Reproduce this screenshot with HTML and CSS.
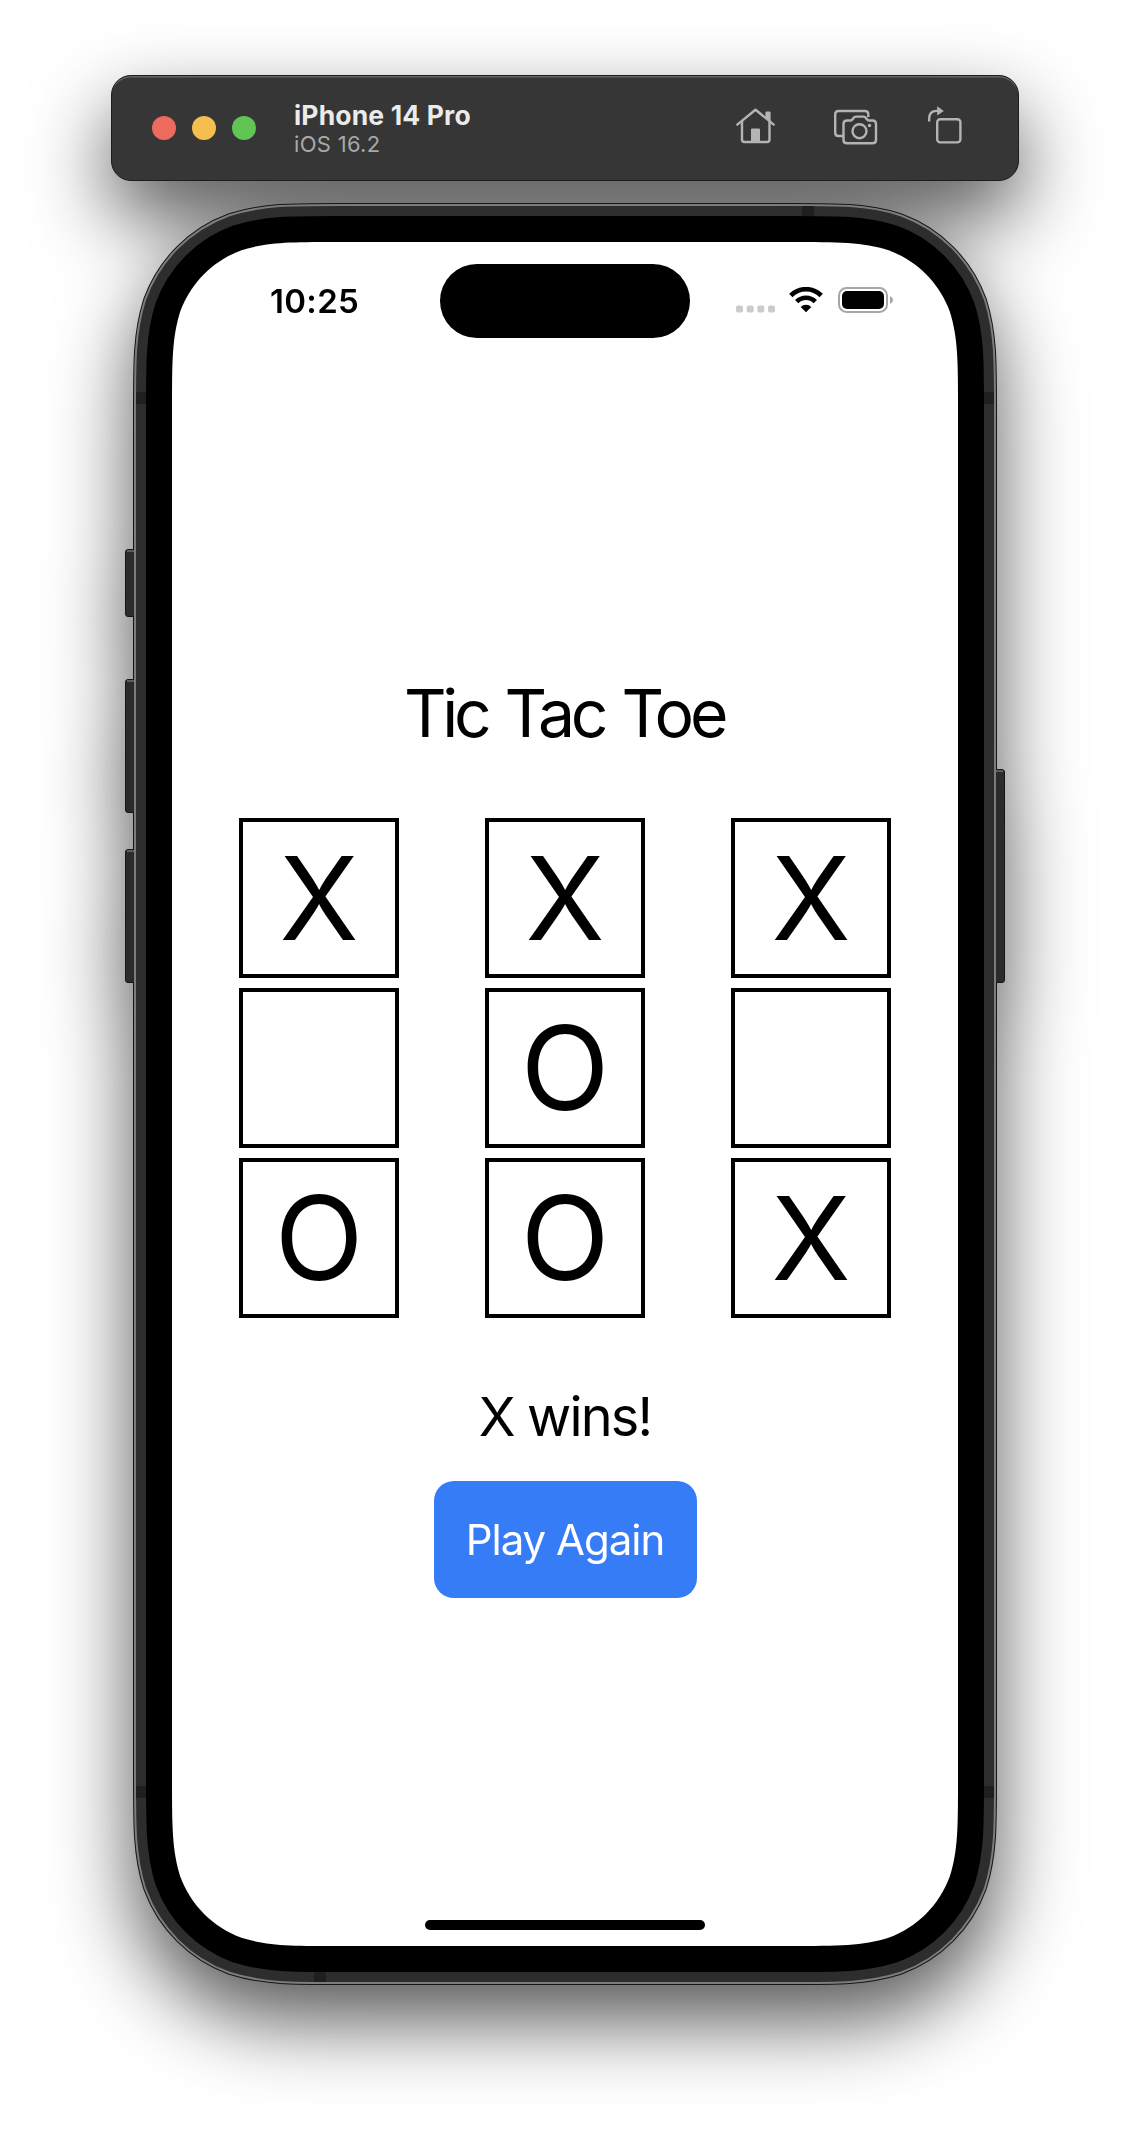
FILE: index.html
```html
<!DOCTYPE html>
<html lang="en">
<head>
<meta charset="utf-8">
<title>iPhone 14 Pro – Tic Tac Toe</title>
<link rel="stylesheet" href="styles.css">
</head>
<body>
<div class="simulator">
  <header class="toolbar">
    <div class="lights">
      <span class="light light-close"></span>
      <span class="light light-minimise"></span>
      <span class="light light-zoom"></span>
    </div>
    <div class="device">
      <div class="device-name">iPhone 14 Pro</div>
      <div class="device-os">iOS 16.2</div>
    </div>
    <div class="actions">
      <svg width="40" height="36" viewBox="0 0 40 36" fill="none" stroke="currentColor" stroke-width="2.4" stroke-linejoin="round" stroke-linecap="round">
        <path d="M1.3 16.6 L19.5 1.7 L37.7 16.6"/>
        <path d="M30.6 10V4.6H33.4V12.5" fill="currentColor"/>
        <path d="M6 13V31.5Q6 34 8.5 34H31Q33.5 34 33.5 31.5V13"/>
        <path d="M15.5 34V21H23.5V34Z" fill="currentColor" stroke-width="1"/>
      </svg>
      <svg width="44" height="36" viewBox="0 0 44 36" fill="none" stroke="currentColor" stroke-width="2.4" stroke-linejoin="round">
        <path d="M9 27H4.5Q1.2 27 1.2 23.7V5.3Q1.2 2 4.5 2H31Q34.3 2 34.3 5.3V8"/>
        <path d="M13 11.5H16.5Q17.8 11.5 18.6 10.2L19.7 8.7Q20.5 7.6 22 7.6H29.5Q31 7.6 31.8 8.7L32.9 10.2Q33.7 11.5 35 11.5H38.5Q42 11.5 42 15V31Q42 34.3 38.5 34.3H13Q9.5 34.3 9.5 31V15Q9.5 11.5 13 11.5Z"/>
        <circle cx="25.5" cy="22.2" r="7"/>
        <circle cx="35.5" cy="16.5" r="1.7" fill="currentColor" stroke="none"/>
      </svg>
      <svg class="rotate" width="34" height="38" viewBox="0 0 34 38" fill="none" stroke="currentColor" stroke-width="2.4">
        <rect x="9.2" y="13.2" width="23.2" height="23.2" rx="3"/>
        <path d="M1.2 15.5V12.5Q1.2 4.9 8.5 4.9H10"/>
        <path d="M9.2 0.3L15.8 4.9L9.2 9.6Z" fill="currentColor" stroke="none"/>
      </svg>
    </div>
  </header>

  <main class="phone">
    <svg class="frame" width="864" height="1782" viewBox="0 0 864 1782">
      <defs>
        <path id="edge" d="M207.15 39H656.85C705.27 39 729.48 39 755.54 47.24C783.99 57.6 806.4 80.01 816.76 108.46C825 134.52 825 158.73 825 207.15V1574.85C825 1623.27 825 1647.48 816.76 1673.54C806.4 1701.99 783.99 1724.4 755.54 1734.76C729.48 1743 705.27 1743 656.85 1743H207.15C158.73 1743 134.52 1743 108.46 1734.76C80.01 1724.4 57.6 1701.99 47.24 1673.54C39 1647.48 39 1623.27 39 1574.85V207.15C39 158.73 39 134.52 47.24 108.46C57.6 80.01 80.01 57.6 108.46 47.24C134.52 39 158.73 39 207.15 39Z"/>
      </defs>
      <use href="#edge" class="rim"/>
      <g class="keys">
        <rect x="-7.5" y="346.5" width="14" height="67" rx="2.5"/>
        <rect x="-7.5" y="476.5" width="14" height="133" rx="2.5"/>
        <rect x="-7.5" y="646.5" width="14" height="133" rx="2.5"/>
        <rect x="858" y="566.5" width="13.5" height="213" rx="2.5"/>
      </g>
      <path class="key-tops" d="M-6 348H2M-6 478H2M-6 648H2M862 568H870"/>
      <use href="#edge" class="chamfer"/>
      <use href="#edge" class="band"/>
      <path class="antenna" d="M669 3h12v10h-12zM181 1769h12v10h-12zM3 189h10v12H3zM851 189h10v12h-10zM3 1583h10v12H3zM851 1583h10v12h-10z"/>
      <use href="#edge" class="bezel"/>
      <use href="#edge" class="glass"/>
    </svg>

    <div class="screen">
      <div class="status-bar">
        <div class="clock">10:25</div>
        <div class="island"></div>
        <div class="indicators">
          <svg width="39" height="8" viewBox="0 0 39 8" fill="#cbcbcb">
            <rect x="0" y="0.5" width="7" height="7" rx="2"/><rect x="10.7" y="0.5" width="7" height="7" rx="2"/><rect x="21.3" y="0.5" width="7" height="7" rx="2"/><rect x="32" y="0.5" width="7" height="7" rx="2"/>
          </svg>
          <svg class="wifi" width="34" height="26" viewBox="0 0 34 26" fill="none" stroke="#000" stroke-width="4.7">
            <path d="M1.8 8.5A21.5 21.5 0 0 1 32.2 8.5"/>
            <path d="M7.7 14.6A13.1 13.1 0 0 1 26.3 14.6"/>
            <path d="M17 25.2L11.7 20A7.5 7.5 0 0 1 22.3 20Z" fill="#000" stroke="none"/>
          </svg>
          <svg width="56" height="26" viewBox="0 0 56 26">
            <rect x="1" y="1" width="48" height="24" rx="7.5" fill="none" stroke="#a6a6a6" stroke-width="2"/>
            <rect x="4" y="4" width="42" height="18" rx="5" fill="#000"/>
            <path d="M52 9Q55 10.5 55 13Q55 15.5 52 17Z" fill="#a6a6a6"/>
          </svg>
        </div>
      </div>

      <div class="game">
        <h1 class="title">Tic Tac Toe</h1>
        <div class="board">
          <div class="cell">X</div><div class="cell">X</div><div class="cell">X</div>
          <div class="cell"></div><div class="cell">O</div><div class="cell"></div>
          <div class="cell">O</div><div class="cell">O</div><div class="cell">X</div>
        </div>
        <p class="result">X wins!</p>
        <button class="again" type="button">Play Again</button>
      </div>

      <div class="home-indicator"></div>
    </div>
  </main>
</div>
</body>
</html>
```
FILE: styles.css
```css
* { box-sizing: border-box; }

body {
  margin: 0;
  background: #fff;
  font-family: Inter, "Liberation Sans", sans-serif;
}

.simulator {
  width: 1130px;
  height: 2136px;
  padding-top: 75px;
  display: flex;
  flex-direction: column;
  align-items: center;
  gap: 22px;
  overflow: hidden;
  filter: drop-shadow(0 36px 40px rgba(0, 0, 0, .66));
}

.toolbar {
  width: 908px;
  height: 106px;
  padding: 0 56px 0 40px;
  display: flex;
  align-items: center;
  border-radius: 20px;
  background: #363636;
  border: 1px solid #1c1c1c;
  box-shadow: inset 0 2px 0 -0.5px #656565;
}

.lights { display: flex; gap: 16px; }
.light { width: 24px; height: 24px; border-radius: 50%; }
.light-close { background: #ec6a5e; }
.light-minimise { background: #f4bf4f; }
.light-zoom { background: #61c554; }

.device { margin: -1px 0 0 38px; white-space: nowrap; }
.device-name {
  font-size: 26.5px;
  line-height: 32px;
  font-weight: 700;
  letter-spacing: .15px;
  color: #ebebeb;
}
.device-os {
  font-size: 22px;
  line-height: 26px;
  letter-spacing: .3px;
  color: #a8a8a8;
}

.actions {
  margin: -4px 0 0 auto;
  display: flex;
  align-items: center;
  color: #b4b4b4;
}
.actions svg:nth-child(2) { margin: 1px 50px 0 58px; }
.rotate { margin-top: -3px; }

.phone {
  width: 864px;
  height: 1782px;
  padding: 39px;
  position: relative;
}

.frame {
  position: absolute;
  inset: 0;
  overflow: visible;
}
.rim, .chamfer, .band, .bezel { fill: none; }
.rim { stroke: #161616; stroke-width: 78px; }
.chamfer { stroke: #7c7c7c; stroke-width: 76px; }
.band { stroke: #2d2d2d; stroke-width: 72px; }
.bezel { stroke: #000; stroke-width: 52px; }
.glass { fill: #fff; }
.antenna { fill: #1f1f1f; }
.keys { fill: #2b2b2b; stroke: #161616; stroke-width: 1px; }
.key-tops { stroke: #5c5c5c; stroke-width: 2px; }

.screen {
  position: relative;
  height: 1704px;
  display: flex;
  flex-direction: column;
  align-items: center;
  color: #000;
}

.status-bar {
  width: 100%;
  height: 118px;
  padding: 22px 64px 0 98px;
  display: grid;
  grid-template-columns: 170px 250px 1fr;
  align-items: start;
}
.clock {
  padding-top: 17px;
  font-size: 33px;
  line-height: 40px;
  font-weight: 600;
  letter-spacing: .3px;
}
.island { height: 74px; border-radius: 37px; background: #000; }
.indicators {
  padding-top: 23px;
  display: flex;
  justify-content: flex-end;
  align-items: flex-end;
}
.wifi { margin: 0 15px 0 14px; }

.game {
  margin-top: 313px;
  display: flex;
  flex-direction: column;
  align-items: center;
}
.title {
  margin: 0 2px 0 0;
  font-size: 66px;
  line-height: 80px;
  font-weight: 400;
  letter-spacing: -4.3px;
  word-spacing: 3px;
}
.board {
  margin-top: 65px;
  display: grid;
  grid-template-columns: repeat(3, 160px);
  grid-auto-rows: 160px;
  gap: 10px 86px;
}
.cell {
  display: flex;
  align-items: center;
  justify-content: center;
  border: 4px solid #000;
  font-size: 116px;
  line-height: 152px;
}
.result {
  margin: 67px 0 0;
  font-size: 54px;
  line-height: 64px;
  letter-spacing: -1.8px;
}
.again {
  margin-top: 32px;
  width: 263px;
  height: 117px;
  padding: 0;
  border: 0;
  border-radius: 20px;
  background: #367cf7;
  color: #fff;
  font: 400 42px/50px Inter, "Liberation Sans", sans-serif;
  letter-spacing: -1px;
}

.home-indicator {
  margin-top: auto;
  margin-bottom: 16px;
  width: 280px;
  height: 10px;
  border-radius: 5px;
  background: #000;
}
```
